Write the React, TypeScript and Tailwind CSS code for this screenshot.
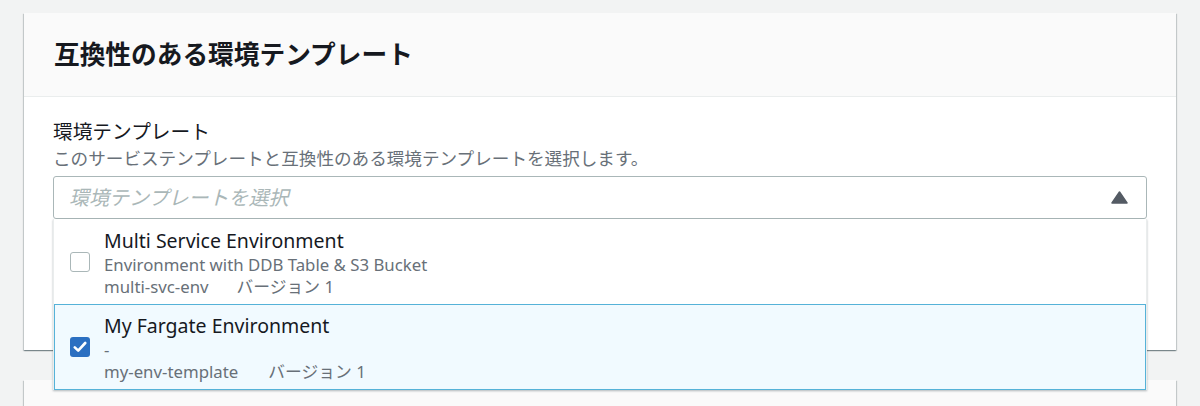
import React from "react";

const font = { fontFamily: '"Noto Sans", "Noto Sans CJK JP", sans-serif' };

function Checkbox({ checked }: { checked: boolean }) {
  if (checked) {
    return (
      <div className="w-[20px] h-[20px] rounded-[3px] bg-[#2b6fc1] flex items-center justify-center shrink-0">
        <svg width="14" height="12" viewBox="0 0 14 12" fill="none">
          <path d="M1.8 6.4 L5.2 9.6 L12.2 2" stroke="white" strokeWidth="2.6" strokeLinecap="round" strokeLinejoin="round" />
        </svg>
      </div>
    );
  }
  return <div className="w-[20px] h-[20px] rounded-[3px] border border-[#aab7b8] bg-white shrink-0" />;
}

function Option({
  name,
  desc,
  id,
  checked,
  gap,
}: {
  name: string;
  desc: string;
  id: string;
  checked: boolean;
  gap: string;
}) {
  return (
    <div
      className={
        checked
          ? "flex items-center h-[86px] pl-[15px] bg-[#f1faff] border border-[#55b2d8]"
          : "flex items-center h-[85px] pl-[16px] bg-white"
      }
    >
      <Checkbox checked={checked} />
      <div className="ml-[14px] flex flex-col pt-[2px]">
        <div className="text-[19.5px] leading-[25px] text-[#16191f]">{name}</div>
        <div className="text-[16.8px] leading-[23px] text-[#687078]">{desc}</div>
        <div className="text-[16.8px] leading-[22px] text-[#687078] flex">
          <span>{id}</span>
          <span className={gap}>バージョン 1</span>
        </div>
      </div>
    </div>
  );
}

export default function App() {
  return (
    <div className="w-[1200px] h-[406px] overflow-hidden bg-[#f2f3f3] pt-[13px]" style={font}>
      <div className="ml-[24px] w-[1152px] h-[337px] bg-white shadow-[0_1px_1px_0_rgba(0,28,36,0.3),1px_1px_1px_0_rgba(0,28,36,0.15),-1px_1px_1px_0_rgba(0,28,36,0.15)]">
        <div className="h-[84px] bg-[#fafafa] border-b border-[#eaeded] px-[30px] flex items-center">
          <h2 className="text-[25.7px] font-bold text-[#16191f] leading-[32px]">互換性のある環境テンプレート</h2>
        </div>
        <div className="px-[29px] pt-[22px]">
          <div className="text-[19.7px] leading-[26px] text-[#16191f]">環境テンプレート</div>
          <div className="text-[17.6px] leading-[24px] text-[#687078] mt-[1px]">
            このサービステンプレートと互換性のある環境テンプレートを選択します。
          </div>
          <div className="relative mt-[6px]">
            <div className="h-[43px] border border-[#aab7b8] rounded-[3px] bg-white flex items-center justify-between pl-[15px] pr-[18px]">
              <span className="text-[20px] italic text-[#aab7b8]">環境テンプレートを選択</span>
              <svg width="17" height="13" viewBox="0 0 17 13">
                <path d="M8.5 1 L16 12 L1 12 Z" fill="#545b64" stroke="#545b64" strokeWidth="1.5" strokeLinejoin="round" />
              </svg>
            </div>
            <div className="absolute left-0 right-0 top-full bg-white border-x border-[#eaeded] shadow-[0_1px_2px_0_rgba(0,28,36,0.3)] z-10">
              <Option
                name="Multi Service Environment"
                desc="Environment with DDB Table & S3 Bucket"
                id="multi-svc-env"
                checked={false}
                gap="ml-[28px]"
              />
              <Option name="My Fargate Environment" desc="-" id="my-env-template" checked={true} gap="ml-[30px]" />
            </div>
          </div>
        </div>
      </div>
      <div className="ml-[24px] mt-[30px] w-[1152px] h-[60px] bg-[#fafafa] shadow-[0_1px_1px_0_rgba(0,28,36,0.3),1px_1px_1px_0_rgba(0,28,36,0.15),-1px_1px_1px_0_rgba(0,28,36,0.15)]" />
    </div>
  );
}
